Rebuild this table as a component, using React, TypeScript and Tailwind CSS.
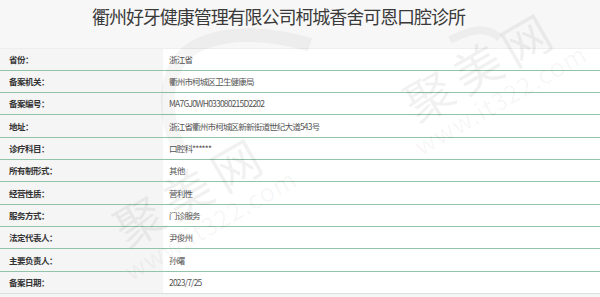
const rows = [
  { label: "省份：", value: "浙江省" },
  { label: "备案机关：", value: "衢州市柯城区卫生健康局" },
  { label: "备案编号：", value: "MA7GJ0WH033080215D2202" },
  { label: "地址：", value: "浙江省衢州市柯城区新新街道世纪大道543号" },
  { label: "诊疗科目：", value: "口腔科******" },
  { label: "所有制形式：", value: "其他" },
  { label: "经营性质：", value: "营利性" },
  { label: "服务方式：", value: "门诊服务" },
  { label: "法定代表人：", value: "尹俊州" },
  { label: "主要负责人：", value: "孙曙" },
  { label: "备案日期：", value: "2023/7/25" },
];

function Watermark({ className }: { className: string }) {
  return (
    <div className={`pointer-events-none absolute flex flex-col items-center -rotate-[30deg] ${className}`}>
      <div className="text-[48px] leading-none tracking-[8px] text-[#000]/[0.055]">聚美网</div>
      <div className="mt-1 text-[25px] leading-none tracking-[1px] text-[#000]/[0.045]">www.it322.com</div>
    </div>
  );
}

export default function App() {
  return (
    <div
      className="relative h-[297px] w-[600px] overflow-hidden bg-[#f5f5f5]"
      style={{ fontFamily: '"Microsoft YaHei", "Noto Sans CJK SC", "Noto Sans", sans-serif' }}
    >
      <div className="h-[48.5px] border-b border-[#eeeeee] bg-[#f7f7f7] pl-[92px] pt-[6px]">
        <h1 className="text-[18px] leading-[20px] tracking-[-1.05px] text-[#3a3a3a]">
          衢州好牙健康管理有限公司柯城香舍可恩口腔诊所
        </h1>
      </div>

      <div className="flex flex-col">
        {rows.map((r, i) => (
          <div
            key={r.label}
            className={`flex h-[22.33px] border-b ${i === rows.length - 1 ? "border-[#d6e3dc]" : "border-[#93c4aa]"}`}
          >
            <div className="flex w-[163px] items-center bg-[#f5f5f5] pl-[9px] text-[8.5px] font-semibold tracking-[-0.5px] text-[#333]">
              {r.label}
            </div>
            <div className="flex flex-1 items-center bg-white pl-[6px] text-[8.5px] tracking-[-0.8px] text-[#555]">
              {r.value}
            </div>
          </div>
        ))}
      </div>

      <svg className="pointer-events-none absolute left-[150px] top-[20px]" width="360" height="130" viewBox="0 0 360 130">
        <path d="M30 130 C10 90 15 50 40 30 C70 10 120 12 160 25" fill="none" stroke="#000" strokeOpacity="0.04" strokeWidth="14" />
        <path d="M300 20 C320 10 335 5 350 18" fill="none" stroke="#000" strokeOpacity="0.04" strokeWidth="8" />
      </svg>

      <Watermark className="left-[390px] top-[38px]" />
      <Watermark className="left-[100px] top-[163px]" />
    </div>
  );
}
